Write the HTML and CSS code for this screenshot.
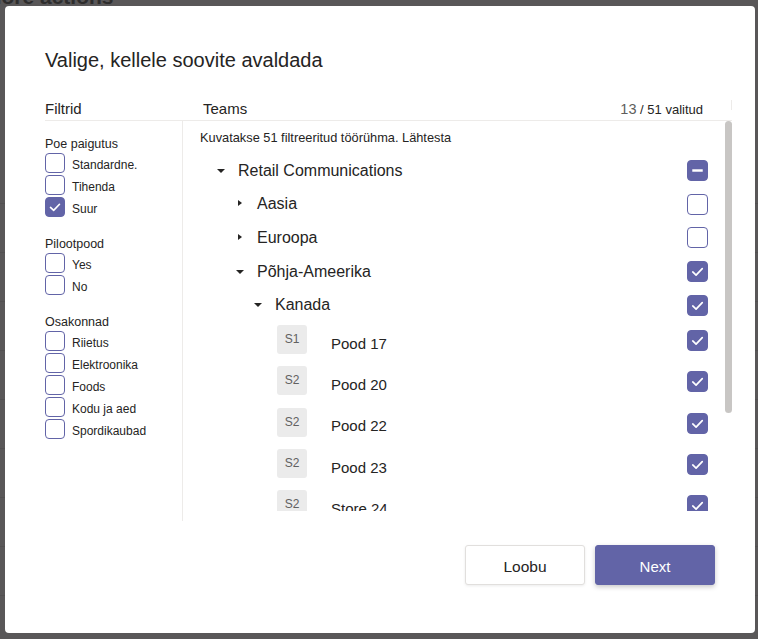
FILE: index.html
```html
<!DOCTYPE html>
<html lang="et">
<head>
  <meta charset="UTF-8" />
  <title>Valige, kellele soovite avaldada</title>
  <link rel="stylesheet" href="styles.css">
</head>
<body>
  <div class="page">
    <h1 class="page-title">More actions</h1>
    <ul class="page-rows">
      <li></li><li></li><li></li><li></li><li></li><li></li><li></li><li></li><li></li><li></li>
    </ul>
  </div>

  <div class="dialog">
    <h2 class="dialog-title">Valige, kellele soovite avaldada</h2>

    <div class="panel-head">
      <div class="head-filters">Filtrid</div>
      <div class="head-teams">
        <span>Teams</span>
        <span class="count"><span class="count-num">13</span> / 51 valitud</span>
        <span class="head-tick"></span>
      </div>
    </div>

    <div class="panel-body">
      <div class="filters">
        <div class="filter-group">
          <div class="filter-title">Poe paigutus</div>
          <label class="filter-item"><span class="cb"></span><span>Standardne.</span></label>
          <label class="filter-item"><span class="cb"></span><span>Tihenda</span></label>
          <label class="filter-item"><span class="cb on"><svg viewBox="0 0 20 20"><path d="M5 10.5l3.5 3.3L15 7"/></svg></span><span>Suur</span></label>
        </div>
        <div class="filter-group">
          <div class="filter-title">Pilootpood</div>
          <label class="filter-item"><span class="cb"></span><span>Yes</span></label>
          <label class="filter-item"><span class="cb"></span><span>No</span></label>
        </div>
        <div class="filter-group">
          <div class="filter-title">Osakonnad</div>
          <label class="filter-item"><span class="cb"></span><span>Riietus</span></label>
          <label class="filter-item"><span class="cb"></span><span>Elektroonika</span></label>
          <label class="filter-item"><span class="cb"></span><span>Foods</span></label>
          <label class="filter-item"><span class="cb"></span><span>Kodu ja aed</span></label>
          <label class="filter-item"><span class="cb"></span><span>Spordikaubad</span></label>
        </div>
      </div>

      <div class="teams">
        <div class="teams-list">
          <p class="hint">Kuvatakse 51 filtreeritud töörühma. Lähtesta</p>

          <div class="tree-row lvl0">
            <span class="caret down"></span>
            <span class="tree-label">Retail Communications</span>
            <span class="cb big on"><svg viewBox="0 0 20 20"><path d="M4.5 10h11" class="dash"/></svg></span>
          </div>
          <div class="tree-row lvl1">
            <span class="caret right"></span>
            <span class="tree-label">Aasia</span>
            <span class="cb big"></span>
          </div>
          <div class="tree-row lvl1">
            <span class="caret right"></span>
            <span class="tree-label">Euroopa</span>
            <span class="cb big"></span>
          </div>
          <div class="tree-row lvl1">
            <span class="caret down"></span>
            <span class="tree-label">Põhja-Ameerika</span>
            <span class="cb big on"><svg viewBox="0 0 20 20"><path d="M5 10.5l3.5 3.3L15 7"/></svg></span>
          </div>
          <div class="tree-row lvl2">
            <span class="caret down"></span>
            <span class="tree-label">Kanada</span>
            <span class="cb big on"><svg viewBox="0 0 20 20"><path d="M5 10.5l3.5 3.3L15 7"/></svg></span>
          </div>

          <div class="store-row">
            <span class="avatar">S1</span>
            <span class="store-label">Pood 17</span>
            <span class="cb big on"><svg viewBox="0 0 20 20"><path d="M5 10.5l3.5 3.3L15 7"/></svg></span>
          </div>
          <div class="store-row">
            <span class="avatar">S2</span>
            <span class="store-label">Pood 20</span>
            <span class="cb big on"><svg viewBox="0 0 20 20"><path d="M5 10.5l3.5 3.3L15 7"/></svg></span>
          </div>
          <div class="store-row">
            <span class="avatar">S2</span>
            <span class="store-label">Pood 22</span>
            <span class="cb big on"><svg viewBox="0 0 20 20"><path d="M5 10.5l3.5 3.3L15 7"/></svg></span>
          </div>
          <div class="store-row">
            <span class="avatar">S2</span>
            <span class="store-label">Pood 23</span>
            <span class="cb big on"><svg viewBox="0 0 20 20"><path d="M5 10.5l3.5 3.3L15 7"/></svg></span>
          </div>
          <div class="store-row">
            <span class="avatar">S2</span>
            <span class="store-label">Store 24</span>
            <span class="cb big on"><svg viewBox="0 0 20 20"><path d="M5 10.5l3.5 3.3L15 7"/></svg></span>
          </div>
        </div>
        <div class="scrollbar"><div class="thumb"></div></div>
      </div>
    </div>

    <div class="dialog-actions">
      <button class="btn">Loobu</button>
      <button class="btn btn-primary">Next</button>
    </div>
  </div>
</body>
</html>
```

FILE: styles.css
```css
body {
  margin: 0;
  padding: 0;
  background: #595758;
  font-family: "Liberation Sans", Arial, sans-serif;
  color: #252423;
  overflow: hidden;
}

/* page behind the dimmed overlay */
.page-title {
  margin: -15px 0 0 -16px;
  font-size: 21px;
  font-weight: bold;
  color: #2e2d2d;
}

.page-rows {
  list-style: none;
  margin: 146px 0 0;
  padding: 0;
}

.page-rows li {
  height: 48px;
  border-bottom: 1px solid #525051;
}

/* dialog */
.dialog {
  position: fixed;
  left: 5px;
  top: 6px;
  width: 750px;
  height: 627px;
  box-sizing: border-box;
  padding: 40px 23px 0 40px;
  background: #fff;
  border-radius: 4px;
}

.dialog-title {
  margin: 0;
  font-size: 20px;
  font-weight: normal;
  line-height: 28px;
  color: #252423;
}

.panel-head {
  display: flex;
  margin-top: 25px;
  line-height: 20px;
  font-size: 15px;
  border-bottom: 1px solid #edebe9;
}

.head-filters {
  width: 138px;
}

.head-teams {
  flex: 1;
  display: flex;
  align-items: flex-start;
  padding-left: 20px;
}

.head-teams > span:first-child {
  flex: 1;
}

.count {
  font-size: 13px;
  margin-right: 28px;
}

.count-num {
  font-size: 14.5px;
  color: #605e5c;
}

.head-tick {
  width: 1px;
  height: 10px;
  margin-top: 1px;
  background: #edebe9;
}

.panel-body {
  display: flex;
  height: 400px;
}

/* filters column */
.filters {
  width: 137px;
  border-right: 1px solid #edebe9;
  padding-top: 14px;
}

.filter-group {
  margin-bottom: 18px;
}

.filter-title {
  font-size: 12.5px;
  line-height: 18px;
}

.filter-item {
  display: flex;
  align-items: center;
  gap: 7px;
  height: 20px;
  margin-bottom: 2px;
  font-size: 12px;
}

.filter-item span:last-child {
  padding-top: 4px;
}

.cb {
  display: inline-block;
  flex-shrink: 0;
  width: 20px;
  height: 20px;
  box-sizing: border-box;
  border: 1px solid #6264a7;
  border-radius: 4px;
  background: #fff;
}

.cb.big {
  width: 21px;
  height: 21px;
}

.cb.on {
  background: #6264a7;
}

.cb svg {
  display: block;
  width: 100%;
  height: 100%;
}

.cb path {
  fill: none;
  stroke: #fff;
  stroke-width: 1.8;
  stroke-linecap: round;
  stroke-linejoin: round;
}

.cb path.dash {
  stroke-width: 2.6;
  stroke-linecap: butt;
}

/* teams column */
.teams {
  flex: 1;
  display: flex;
}

.teams-list {
  flex: 1;
  box-sizing: border-box;
  height: 390px;
  overflow: hidden;
  padding: 8px 17px 0 17px;
}

.hint {
  margin: 0 0 7px;
  font-size: 12.8px;
  line-height: 18px;
}

.tree-row {
  display: flex;
  align-items: center;
  height: 33.6px;
  font-size: 16px;
}

.tree-row.lvl0 { padding-left: 17px; }
.tree-row.lvl1 { padding-left: 36px; }
.tree-row.lvl2 { padding-left: 54px; }

.caret {
  width: 21px;
  height: 8px;
  flex-shrink: 0;
  position: relative;
}

.caret::before {
  content: "";
  position: absolute;
  width: 0;
  height: 0;
}

.caret.down::before {
  left: 0;
  top: 2px;
  border-left: 4px solid transparent;
  border-right: 4px solid transparent;
  border-top: 4px solid #252423;
}

.caret.right::before {
  left: 2px;
  top: 0;
  border-top: 3.5px solid transparent;
  border-bottom: 3.5px solid transparent;
  border-left: 4.5px solid #252423;
}

.tree-label {
  flex: 1;
}

.store-row {
  display: flex;
  align-items: center;
  height: 41.3px;
  padding-left: 77px;
}

.avatar {
  width: 30px;
  height: 29px;
  margin-right: 24px;
  margin-bottom: 6px;
  border-radius: 3px;
  background: #ebebeb;
  color: #616161;
  font-size: 12px;
  line-height: 29px;
  text-align: center;
}

.store-label {
  flex: 1;
  font-size: 15px;
  margin-top: 1px;
}

.store-row .cb {
  margin-bottom: 4px;
}

.scrollbar {
  width: 7px;
}

.thumb {
  height: 292px;
  border-radius: 4px;
  background: #c8c6c4;
}

/* footer */
.dialog-actions {
  display: flex;
  justify-content: flex-end;
  gap: 10px;
  margin-top: 24px;
  padding-right: 17px;
}

.btn {
  width: 120px;
  height: 40px;
  padding-top: 4px;
  border: 1px solid #e1dfdd;
  border-radius: 3px;
  background: #fff;
  color: #252423;
  font-family: "Liberation Sans", Arial, sans-serif;
  font-size: 15.5px;
  box-shadow: 0 1px 3px rgba(0, 0, 0, 0.08);
  cursor: pointer;
}

.btn-primary {
  border-color: #6264a7;
  background: #6264a7;
  color: #fff;
  font-size: 15px;
  box-shadow: 0 2px 5px rgba(0, 0, 0, 0.22);
}
```
